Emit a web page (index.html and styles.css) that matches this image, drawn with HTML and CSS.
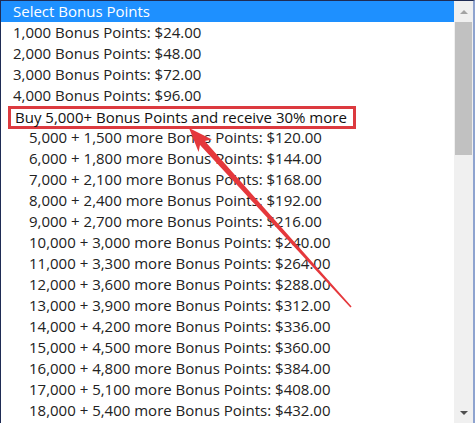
FILE: index.html
```html
<!DOCTYPE html>
<html lang="en">
<head>
<meta charset="utf-8">
<title>Select Bonus Points</title>
<link rel="stylesheet" href="styles.css">
</head>
<body>
<div class="listbox">
  <div class="list">
    <div class="row selected">Select Bonus Points</div>
    <div class="row">1,000 Bonus Points: $24.00</div>
    <div class="row">2,000 Bonus Points: $48.00</div>
    <div class="row">3,000 Bonus Points: $72.00</div>
    <div class="row">4,000 Bonus Points: $96.00</div>
    <div class="row group"><span class="highlight">Buy 5,000+ Bonus Points and receive 30% more</span></div>
    <div class="row sub">5,000 + 1,500 more Bonus Points: $120.00</div>
    <div class="row sub">6,000 + 1,800 more Bonus Points: $144.00</div>
    <div class="row sub">7,000 + 2,100 more Bonus Points: $168.00</div>
    <div class="row sub">8,000 + 2,400 more Bonus Points: $192.00</div>
    <div class="row sub">9,000 + 2,700 more Bonus Points: $216.00</div>
    <div class="row sub">10,000 + 3,000 more Bonus Points: $240.00</div>
    <div class="row sub">11,000 + 3,300 more Bonus Points: $264.00</div>
    <div class="row sub">12,000 + 3,600 more Bonus Points: $288.00</div>
    <div class="row sub">13,000 + 3,900 more Bonus Points: $312.00</div>
    <div class="row sub">14,000 + 4,200 more Bonus Points: $336.00</div>
    <div class="row sub">15,000 + 4,500 more Bonus Points: $360.00</div>
    <div class="row sub">16,000 + 4,800 more Bonus Points: $384.00</div>
    <div class="row sub">17,000 + 5,100 more Bonus Points: $408.00</div>
    <div class="row sub">18,000 + 5,400 more Bonus Points: $432.00</div>
  </div>
  <div class="scrollbar">
    <div class="arrow-btn"><span class="tri up"></span></div>
    <div class="track"><div class="thumb"></div></div>
    <div class="arrow-btn"><span class="tri down"></span></div>
  </div>
  <svg class="annotation" width="475" height="423" viewBox="0 0 475 423">
    <polygon fill="#e5383c" points="189,128 212,139.5 204.8,141 351.6,306.6 350.4,307.4 200,145 198.6,152"/>
  </svg>
</div>
</body>
</html>
```

FILE: styles.css
```css
html, body {
  margin: 0;
  padding: 0;
  background: #ffffff;
}

body {
  width: 475px;
  height: 423px;
  overflow: hidden;
  font-family: "Open Sans", "Noto Sans", sans-serif;
  font-size: 15px;
  color: #222222;
}

.listbox {
  position: relative;
  box-sizing: border-box;
  width: 475px;
  height: 423px;
  border-top: 1px solid #1f2c55;
  border-left: 1px solid #1f2c55;
  border-right: 2px solid #8ea3cf;
  display: flex;
  overflow: hidden;
}

.list {
  flex: 1;
  min-width: 0;
}

.row {
  height: 21px;
  line-height: 21px;
  padding-left: 12px;
  white-space: nowrap;
}

.row.selected {
  background: #1e90ff;
  color: #ffffff;
}

.row.group {
  padding-left: 7px;
}

.highlight {
  display: inline-block;
  box-sizing: border-box;
  width: 348px;
  height: 23px;
  line-height: 17px;
  padding-left: 4px;
  border: 3px solid #dc3a3f;
  color: #111111;
}

.row.sub {
  padding-left: 28px;
}

.scrollbar {
  width: 19px;
  background: #f0f0f0;
  display: flex;
  flex-direction: column;
}

.arrow-btn {
  height: 21px;
  display: flex;
  align-items: center;
  justify-content: center;
}

.track {
  flex: 1;
  padding: 0 1px;
}

.thumb {
  height: 133px;
  background: #c1c1c1;
}

.tri {
  width: 0;
  height: 0;
  border-left: 4px solid transparent;
  border-right: 4px solid transparent;
}

.tri.up {
  border-bottom: 4px solid #a3a3a3;
}

.tri.down {
  border-top: 4px solid #505050;
}

.annotation {
  position: absolute;
  left: -1px;
  top: -1px;
  pointer-events: none;
}
```
